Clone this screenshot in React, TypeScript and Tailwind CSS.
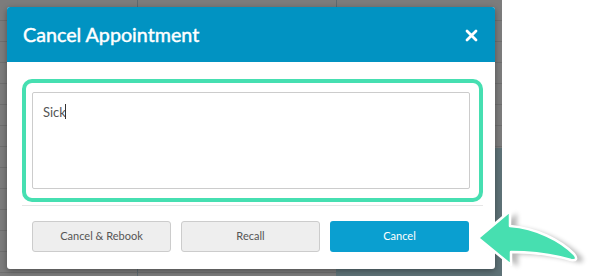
import { useState } from "react";

export default function App() {
  const [reason, setReason] = useState("Sick");

  return (
    <div className="relative w-[594px] h-[276px] overflow-hidden bg-white font-['Lato','Open_Sans',sans-serif]">
      {/* dimmed calendar behind the dialog */}
      <div className="absolute left-0 top-0 w-[502px] h-[276px] bg-[#7c7c7c] bg-[repeating-linear-gradient(to_bottom,transparent_0px,transparent_20px,#6f6f6f_20px,#6f6f6f_21px)]" />
      <div className="absolute left-[336px] top-[148px] w-[166px] h-[128px] bg-[#5e7277]" />
      <div className="absolute left-[137px] top-0 w-px h-[276px] bg-[#5e6a70]" />
      <div className="absolute left-[336px] top-0 w-px h-[148px] bg-[#5e6a70]" />

      {/* dialog */}
      <div className="relative ml-[7px] mt-[7px] w-[488px] h-[262px] bg-white rounded-[3px] shadow-[0_2px_6px_rgba(0,0,0,0.35)] flex flex-col">
        <div className="h-[55px] bg-[#0193c2] rounded-t-[3px] flex items-center justify-between pl-[16px] pr-[17px]">
          <h2 className="text-white text-[19.7px] leading-none pt-[1px] [-webkit-text-stroke:0.45px_white]">Cancel Appointment</h2>
          <svg width="13" height="13" viewBox="0 0 13 13" className="mt-[1px]">
            <path d="M2 2 L11 11 M11 2 L2 11" stroke="#fff" strokeWidth="2.8" strokeLinecap="round" />
          </svg>
        </div>

        <div className="px-[15px] pt-[17px]">
          <div className="w-[461px] border-4 border-[#46dfb1] rounded-[10px] pl-[6px] pr-[9px] py-[9px]">
            <div className="relative">
              <textarea
                value={reason}
                onChange={(e) => setReason(e.target.value)}
                className="block w-[438px] h-[97px] resize-none border border-[#cccccc] rounded-[2px] px-[10px] py-[10px] text-[13px] text-[#555] leading-[18px] outline-none font-['Lato',sans-serif]"
              />
              {/* text cursor */}
              <span className="absolute left-[33px] top-[12px] w-px h-[15px] bg-[#333]" />
            </div>
          </div>
          <div className="mt-[3px] w-[461px] h-px bg-[#e6e6e6]" />
        </div>

        <div className="flex gap-[10px] px-[25px] pt-[15px]">
          <button className="w-[139px] h-[31px] rounded-[3px] border border-[#cccccc] bg-[#eeeeee] text-[11px] text-[#555]">
            Cancel &amp; Rebook
          </button>
          <button className="w-[139px] h-[31px] rounded-[3px] border border-[#cccccc] bg-[#eeeeee] text-[11px] text-[#555]">
            Recall
          </button>
          <button className="w-[139px] h-[31px] rounded-[3px] bg-[#0a9fd0] text-[11px] text-white">
            Cancel
          </button>
        </div>
      </div>

      {/* pointer arrow */}
      <svg className="absolute left-[470px] top-[204px]" width="124" height="70" viewBox="0 0 124 70">
        <defs>
          <filter id="sh" x="-20%" y="-20%" width="150%" height="160%">
            <feGaussianBlur stdDeviation="2.5" />
          </filter>
        </defs>
        <path
          d="M8 34 L40 7 L40 22 C66 24 90 36 104 50 C108 55 106 57 101 56 C84 51 64 48 41 48 L41 61 Z"
          fill="#000"
          opacity="0.28"
          filter="url(#sh)"
          transform="translate(7 2)"
        />
        <path
          d="M8 34 L40 7 L40 22 C66 24 90 36 104 50 C108 55 106 57 101 56 C84 51 64 48 41 48 L41 61 Z"
          fill="#47dfb0"
          stroke="#fff"
          strokeWidth="2.5"
          strokeLinejoin="round"
        />
      </svg>
    </div>
  );
}
